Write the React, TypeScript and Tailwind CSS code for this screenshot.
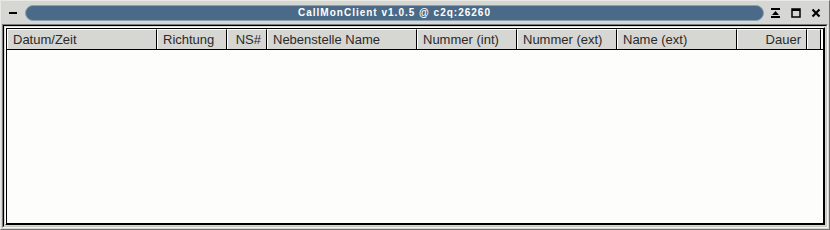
const columns = [
  { label: 'Datum/Zeit', w: 'w-[150px]', align: 'text-left' },
  { label: 'Richtung', w: 'w-[70px]', align: 'text-left' },
  { label: 'NS#', w: 'w-[40px]', align: 'text-right' },
  { label: 'Nebenstelle Name', w: 'w-[150px]', align: 'text-left' },
  { label: 'Nummer (int)', w: 'w-[100px]', align: 'text-left' },
  { label: 'Nummer (ext)', w: 'w-[100px]', align: 'text-left' },
  { label: 'Name (ext)', w: 'w-[120px]', align: 'text-left' },
  { label: 'Dauer', w: 'w-[70px]', align: 'text-right' },
];

const App = () => {
  return (
    <div
      className="w-[830px] h-[230px] bg-[#d6d6d2] border border-t-[#e8e8e4] border-l-[#e8e8e4] border-b-[#6f6f6f] border-r-[#6f6f6f] flex flex-col overflow-hidden"
      style={{ fontFamily: '"Liberation Sans", Arial, sans-serif' }}
    >
      {/* title bar */}
      <div className="h-[23px] flex items-center pl-[6px] pr-[8px] shrink-0">
        <div className="w-[12px] h-[16px] flex items-center justify-center mr-[6px]">
          <div className="w-[8px] h-[2px] bg-black" />
        </div>
        <div className="flex-1 h-[16px] mt-[1px] rounded-full bg-[#4a6a87] border border-[#8aa0b4] flex items-center justify-center">
          <span className="text-white text-[10px] font-bold tracking-[1px] leading-none">
            CallMonClient v1.0.5 @ c2q:26260
          </span>
        </div>
        <div className="flex items-center ml-[6px] gap-[10px]">
          <svg width="11" height="10" viewBox="0 0 11 10">
            <rect x="1" y="0" width="9" height="2" fill="#000" />
            <path d="M5.5 3 L9 7 L2 7 Z" fill="#000" />
            <rect x="1" y="8" width="9" height="2" fill="#000" />
          </svg>
          <svg width="10" height="10" viewBox="0 0 10 10">
            <rect x="1" y="1" width="8" height="8" fill="none" stroke="#000" strokeWidth="1.5" />
            <rect x="1" y="1" width="8" height="2" fill="#000" />
          </svg>
          <svg width="10" height="10" viewBox="0 0 10 10">
            <path d="M1.5 1.5 L8.5 8.5 M8.5 1.5 L1.5 8.5" stroke="#000" strokeWidth="2.2" />
          </svg>
        </div>
      </div>

      {/* table frame */}
      <div className="mx-[1px] mb-[1px] flex-1 flex flex-col border border-t-[#7c7c7c] border-l-[#7c7c7c] border-b-[#f4f4f0] border-r-[#f4f4f0]">
        <div className="flex-1 flex flex-col border border-[#000] border-b-[#c8c8c4] border-r-[#c8c8c4] p-[1px]">
          <div className="flex-1 flex flex-col border border-white border-b-black border-r-black">
            <div className="flex-1 flex flex-col border border-black bg-[#fdfdfb]">
              {/* header */}
              <div className="flex h-[21px] shrink-0 border-b border-black">
                {columns.map((c) => (
                  <div
                    key={c.label}
                    className={`${c.w} ${c.align} shrink-0 bg-[#d6d6d2] border-r border-black border-t border-t-white border-l border-l-white px-[5px] text-[13px] leading-[19px] text-[#2a2a2a] whitespace-nowrap`}
                  >
                    {c.label}
                  </div>
                ))}
                <div className="flex-1 bg-[#d6d6d2] border-r border-black border-t border-t-white border-l border-l-white" />
                <div className="w-[2px] bg-[#fdfdfb]" />
              </div>
              <div className="flex-1" />
            </div>
          </div>
        </div>
      </div>
    </div>
  );
};

export default App;
